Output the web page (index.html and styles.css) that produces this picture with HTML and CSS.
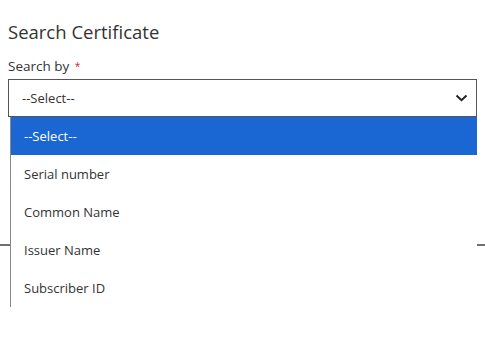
FILE: index.html
```html
<!DOCTYPE html>
<html lang="en">
<head>
    <meta charset="UTF-8">
    <meta name="viewport" content="width=device-width, initial-scale=1.0">
    <title>Search Certificate</title>
    <link rel="stylesheet" href="styles.css">
</head>
<body>

<div class="page">
    <!-- Search panel -->
    <div class="search-panel">
        <div class="panel-title">Search Certificate</div>

        <div class="field">
            <div class="field-label">Search by <span class="required">*</span></div>

            <div class="select-wrap">
                <div class="select-box">
                    <span class="select-value">--Select--</span>
                    <svg class="chevron" width="13" height="8" viewBox="0 0 13 8">
                        <path d="M1.5 1.5 L6.5 6.2 L11.5 1.5" fill="none" stroke="#222" stroke-width="2"/>
                    </svg>
                </div>

                <!-- Open option list -->
                <div class="option-list">
                    <div class="option selected">--Select--</div>
                    <div class="option">Serial number</div>
                    <div class="option">Common Name</div>
                    <div class="option">Issuer Name</div>
                    <div class="option">Subscriber ID</div>
                </div>
            </div>
        </div>
    </div>

    <div class="results"></div>
</div>

</body>
</html>
```

FILE: styles.css
```css
* {
    margin: 0;
    padding: 0;
    box-sizing: border-box;
    font-family: 'Open Sans', 'Liberation Sans', Arial, sans-serif;
}

html, body {
    height: 100%;
}

body {
    background-color: #fff;
    color: #333;
}

.page {
    min-height: 100%;
    display: flex;
    flex-direction: column;
}

.search-panel {
    padding: 20px 8px 0 8px;
    height: 246px;
    border-bottom: 2px solid #6f6f6f;
}

.results {
    flex-grow: 1;
}

.panel-title {
    font-size: 18.5px;
    line-height: 24px;
    color: #333;
}

.field {
    margin-top: 13px;
}

.field-label {
    font-size: 13.5px;
    line-height: 18px;
    color: #333;
}

.required {
    color: #d9232d;
    font-size: 10px;
    vertical-align: top;
    margin-left: 2px;
}

.select-wrap {
    position: relative;
    margin-top: 4px;
}

.select-box {
    display: flex;
    justify-content: space-between;
    align-items: center;
    height: 38px;
    padding: 0 8px 0 13px;
    border: 1px solid #555;
    background-color: #fff;
}

.select-value {
    font-size: 13px;
    color: #333;
}

.option-list {
    position: absolute;
    top: 38px;
    left: 2px;
    right: 0;
    z-index: 10;
    background-color: #fff;
    border-left: 1px solid #888;
}

.option {
    height: 38px;
    line-height: 38px;
    padding-left: 13px;
    font-size: 13px;
    color: #333;
}

.option.selected {
    background-color: #1a66d2;
    color: #fff;
}
```
